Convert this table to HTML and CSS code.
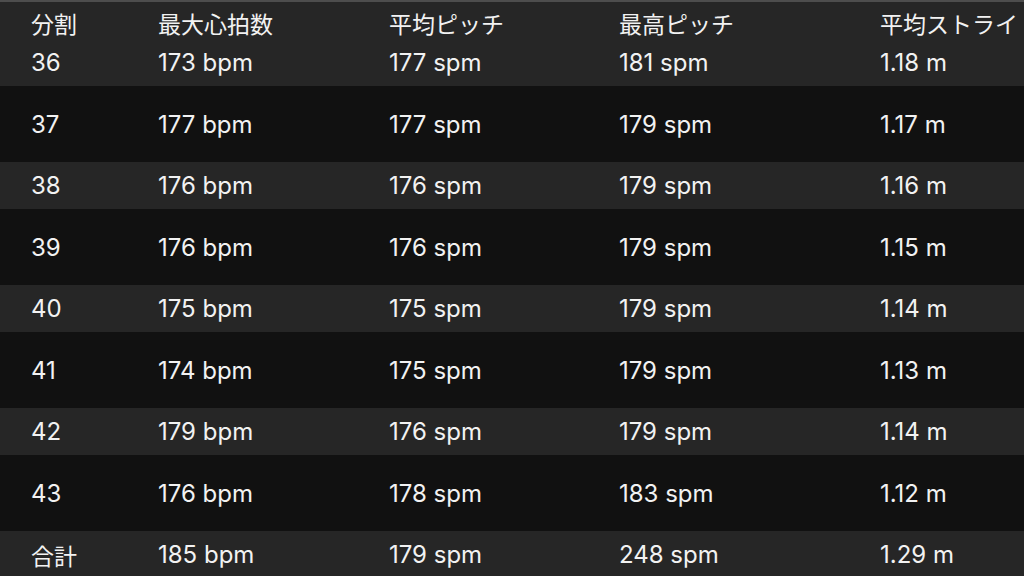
FILE: index.html
```html
<!DOCTYPE html>
<html lang="ja">
<head>
<meta charset="utf-8">
<link rel="stylesheet" href="styles.css">
</head>
<body>
<div class="table">
  <div class="row head">
    <div>分割</div><div>最大心拍数</div><div>平均ピッチ</div><div>最高ピッチ</div><div>平均ストライ</div>
  </div>
  <div class="row light">
    <div>36</div><div>173 bpm</div><div>177 spm</div><div>181 spm</div><div>1.18 m</div>
  </div>
  <div class="row dark">
    <div>37</div><div>177 bpm</div><div>177 spm</div><div>179 spm</div><div>1.17 m</div>
  </div>
  <div class="row light">
    <div>38</div><div>176 bpm</div><div>176 spm</div><div>179 spm</div><div>1.16 m</div>
  </div>
  <div class="row dark">
    <div>39</div><div>176 bpm</div><div>176 spm</div><div>179 spm</div><div>1.15 m</div>
  </div>
  <div class="row light">
    <div>40</div><div>175 bpm</div><div>175 spm</div><div>179 spm</div><div>1.14 m</div>
  </div>
  <div class="row dark">
    <div>41</div><div>174 bpm</div><div>175 spm</div><div>179 spm</div><div>1.13 m</div>
  </div>
  <div class="row light">
    <div>42</div><div>179 bpm</div><div>176 spm</div><div>179 spm</div><div>1.14 m</div>
  </div>
  <div class="row dark">
    <div>43</div><div>176 bpm</div><div>178 spm</div><div>183 spm</div><div>1.12 m</div>
  </div>
  <div class="row light">
    <div class="cjk">合計</div><div>185 bpm</div><div>179 spm</div><div>248 spm</div><div>1.29 m</div>
  </div>
</div>
</body>
</html>
```
FILE: styles.css
```css
html, body {
  margin: 0;
  padding: 0;
  background: #111111;
  overflow: hidden;
}
body {
  width: 1024px;
  height: 576px;
  font-family: Inter, "Noto Sans CJK JP", sans-serif;
  font-size: 24px;
  color: #f2f2f2;
}
.table {
  display: flex;
  flex-direction: column;
}
.row {
  display: grid;
  grid-template-columns: 127px 231px 230px 261px 1fr;
  align-items: center;
  padding-left: 31px;
  white-space: nowrap;
}
.row > div {
  overflow: hidden;
}
.head {
  background: #262626;
  border-top: 2px solid #4d4d4d;
  padding-top: 5px;
  height: 32px;
  font-family: "Noto Sans CJK JP", sans-serif;
  font-size: 23px;
}
.cjk {
  font-family: "Noto Sans CJK JP", sans-serif;
  font-size: 23px;
}
.light {
  background: #262626;
  height: 47px;
}
.dark {
  background: #111111;
  height: 76px;
}
```
